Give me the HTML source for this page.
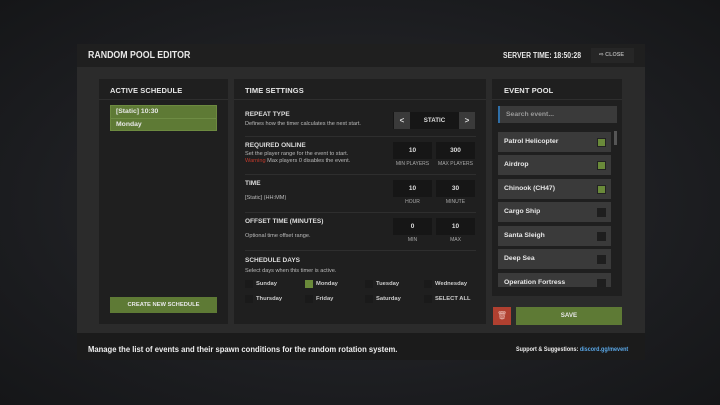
<!DOCTYPE html>
<html><head><style>
*{margin:0;padding:0;box-sizing:border-box}
body{width:720px;height:405px;background:radial-gradient(ellipse at 50% 50%,#2a2c30 0%,#1b1c1f 70%,#151618 100%);font-family:"Liberation Sans",sans-serif;color:#ddd;position:relative;overflow:hidden}
.a{position:absolute}
.b{font-weight:bold}
.sx{transform:scaleX(.88);transform-origin:left center;white-space:nowrap}
.hdr{left:77px;top:44px;width:568px;height:23px;background:#1f1f1f}
.body{left:77px;top:67px;width:568px;height:266px;background:#2b2b2b}
.ftr{left:77px;top:333px;width:568px;height:27px;background:#1b1b1b}
.pan{background:#1f1f1f}
.ph{font-size:7.5px;font-weight:bold;color:#e6e6e6;letter-spacing:.1px}
.line{height:1px;background:#2e2e2e}
.lbl{font-size:6.5px;font-weight:bold;color:#ddd}
.desc{font-size:5.6px;color:#bbb}
.box{background:#161616;width:39px;height:17px;font-size:6.5px;font-weight:bold;text-align:center;line-height:17px;color:#ddd}
.sub{font-size:5px;color:#aaa;text-align:center;width:39px}
.cb{width:8px;height:8px;background:#1a1a1a}
.day{font-size:5.8px;font-weight:bold;color:#ccc}
.it{left:498px;width:113px;height:20px;background:#3a3a3a;font-size:6.8px;font-weight:bold;color:#e8e8e8;padding-left:6px;line-height:20px}
.ck{position:absolute;right:5px;top:6px;width:9px;height:9px;background:#1e1e1e}
.ck.on{background:#6a8a3a;border:1px solid #222}
</style></head><body>
<div class="a hdr"></div>
<div class="a b sx" style="left:88px;top:50px;font-size:10px;color:#e8e8e8">RANDOM POOL EDITOR</div>
<div class="a b sx" style="left:503px;top:51px;font-size:7.8px;color:#e8e8e8">SERVER TIME: 18:50:28</div>
<div class="a" style="left:591px;top:48px;width:43px;height:15px;background:#262626;font-size:5.5px;font-weight:bold;color:#aaa;line-height:15px;padding-left:8px">⇨ CLOSE</div>
<div class="a body"></div>
<div class="a ftr"></div>
<div class="a b sx" style="left:88px;top:344px;font-size:8.6px;color:#eee;transform:scaleX(.89)">Manage the list of events and their spawn conditions for the random rotation system.</div>
<div class="a b sx" style="left:516px;top:346px;font-size:6.2px;color:#eee">Support &amp; Suggestions: <span style="color:#5aa8e8">discord.gg/mevent</span></div>

<!-- active schedule -->
<div class="a pan" style="left:99px;top:79px;width:129px;height:245px"></div>
<div class="a ph" style="left:110px;top:86px">ACTIVE SCHEDULE</div>
<div class="a line" style="left:99px;top:99px;width:129px"></div>
<div class="a" style="left:110px;top:105px;width:107px;height:26px;background:#5e7a35;border:1px solid #6d8a40"></div>
<div class="a b" style="left:116px;top:108px;font-size:6.8px;color:#e8e8e8">[Static] 10:30</div>
<div class="a" style="left:111px;top:118px;width:105px;height:1px;background:#6e8c44"></div>
<div class="a b" style="left:116px;top:121px;font-size:6.8px;color:#e8e8e8">Monday</div>
<div class="a" style="left:110px;top:297px;width:107px;height:16px;background:#5e7a35;font-size:5.8px;font-weight:bold;text-align:center;line-height:16px;color:#e8e8e8">CREATE NEW SCHEDULE</div>

<!-- time settings -->
<div class="a pan" style="left:234px;top:79px;width:252px;height:245px"></div>
<div class="a ph" style="left:245px;top:86px">TIME SETTINGS</div>
<div class="a line" style="left:234px;top:99px;width:252px"></div>
<div class="a lbl" style="left:245px;top:111px">REPEAT TYPE</div>
<div class="a desc" style="left:245px;top:121px">Defines how the timer calculates the next start.</div>
<div class="a" style="left:393px;top:112px;width:82px;height:17px;background:#161616"></div>
<div class="a b" style="left:394px;top:112px;width:16px;height:17px;background:#3a3a3a;font-size:8px;text-align:center;line-height:17px">&lt;</div>
<div class="a b" style="left:459px;top:112px;width:16px;height:17px;background:#3a3a3a;font-size:8px;text-align:center;line-height:17px">&gt;</div>
<div class="a b" style="left:410px;top:112px;width:49px;font-size:6.2px;text-align:center;line-height:17px">STATIC</div>
<div class="a line" style="left:245px;top:136px;width:231px"></div>
<div class="a lbl" style="left:245px;top:142px">REQUIRED ONLINE</div>
<div class="a desc" style="left:245px;top:151px">Set the player range for the event to start.</div>
<div class="a desc" style="left:245px;top:158px"><span style="color:#c0392b">Warning</span> Max players 0 disables the event.</div>
<div class="a box" style="left:393px;top:142px">10</div><div class="a box" style="left:436px;top:142px">300</div>
<div class="a sub" style="left:393px;top:161px">MIN PLAYERS</div><div class="a sub" style="left:436px;top:161px">MAX PLAYERS</div>
<div class="a line" style="left:245px;top:174px;width:231px"></div>
<div class="a lbl" style="left:245px;top:180px">TIME</div>
<div class="a desc" style="left:245px;top:195px">[Static] (HH:MM)</div>
<div class="a box" style="left:393px;top:180px">10</div><div class="a box" style="left:436px;top:180px">30</div>
<div class="a sub" style="left:393px;top:199px">HOUR</div><div class="a sub" style="left:436px;top:199px">MINUTE</div>
<div class="a line" style="left:245px;top:212px;width:231px"></div>
<div class="a lbl" style="left:245px;top:218px">OFFSET TIME (MINUTES)</div>
<div class="a desc" style="left:245px;top:233px">Optional time offset range.</div>
<div class="a box" style="left:393px;top:218px">0</div><div class="a box" style="left:436px;top:218px">10</div>
<div class="a sub" style="left:393px;top:237px">MIN</div><div class="a sub" style="left:436px;top:237px">MAX</div>
<div class="a line" style="left:245px;top:250px;width:231px"></div>
<div class="a lbl" style="left:245px;top:257px">SCHEDULE DAYS</div>
<div class="a desc" style="left:245px;top:268px">Select days when this timer is active.</div>
<div class="a cb" style="left:245px;top:280px"></div><div class="a day" style="left:256px;top:281px">Sunday</div>
<div class="a cb" style="left:305px;top:280px;background:#6a8a3a"></div><div class="a day" style="left:316px;top:281px">Monday</div>
<div class="a cb" style="left:365px;top:280px"></div><div class="a day" style="left:376px;top:281px">Tuesday</div>
<div class="a cb" style="left:424px;top:280px"></div><div class="a day" style="left:435px;top:281px">Wednesday</div>
<div class="a cb" style="left:245px;top:295px"></div><div class="a day" style="left:256px;top:296px">Thursday</div>
<div class="a cb" style="left:305px;top:295px"></div><div class="a day" style="left:316px;top:296px">Friday</div>
<div class="a cb" style="left:365px;top:295px"></div><div class="a day" style="left:376px;top:296px">Saturday</div>
<div class="a cb" style="left:424px;top:295px"></div><div class="a day" style="left:435px;top:296px">SELECT ALL</div>

<!-- event pool -->
<div class="a pan" style="left:492px;top:79px;width:130px;height:217px"></div>
<div class="a ph" style="left:504px;top:86px">EVENT POOL</div>
<div class="a line" style="left:492px;top:99px;width:130px"></div>
<div class="a" style="left:498px;top:106px;width:119px;height:17px;background:#3a3a3a;border-left:2px solid #2f6fa8;font-size:6.8px;font-weight:bold;color:#999;line-height:17px;padding-left:6px">Search event...</div>
<div class="a" style="left:614px;top:131px;width:3px;height:14px;background:#555"></div>
<div class="a" style="left:498px;top:131px;width:113px;height:156px;overflow:hidden">
<div class="a it" style="left:0;top:1px">Patrol Helicopter<div class="ck on"></div></div>
<div class="a it" style="left:0;top:24px">Airdrop<div class="ck on"></div></div>
<div class="a it" style="left:0;top:48px">Chinook (CH47)<div class="ck on"></div></div>
<div class="a it" style="left:0;top:71px">Cargo Ship<div class="ck"></div></div>
<div class="a it" style="left:0;top:95px">Santa Sleigh<div class="ck"></div></div>
<div class="a it" style="left:0;top:118px">Deep Sea<div class="ck"></div></div>
<div class="a it" style="left:0;top:142px">Operation Fortress<div class="ck"></div></div>
</div>
<div class="a" style="left:493px;top:307px;width:18px;height:18px;background:#b04030;font-size:8px;text-align:center;line-height:18px;color:#e8b8b0">🗑</div>
<div class="a" style="left:516px;top:307px;width:106px;height:18px;background:#5e7a35;font-size:6.2px;font-weight:bold;text-align:center;line-height:18px;color:#e8e8e8">SAVE</div>
</body></html>
